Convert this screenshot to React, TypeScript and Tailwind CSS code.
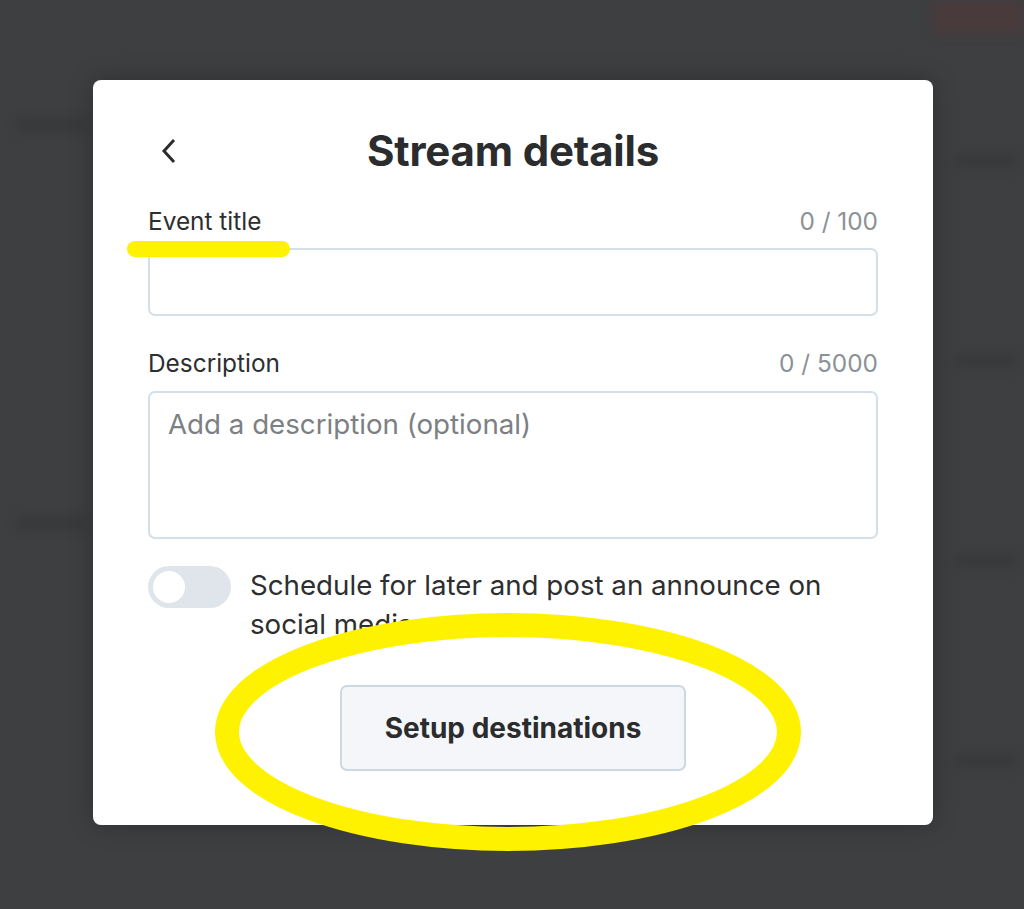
import React from "react";

export default function App() {
  return (
    <div
      className="relative w-[1024px] h-[909px] overflow-hidden bg-[#3e3f41]"
      style={{ fontFamily: "Inter, 'Noto Sans', sans-serif" }}
    >
      {/* dimmed page behind the dialog */}
      <div className="flex justify-between w-full h-full blur-[6px] opacity-40">
        <div className="flex flex-col w-[100px] pl-[16px]">
          <div className="mt-[118px] h-[14px] w-[70px] rounded bg-[#2e2f31]" />
          <div className="mt-[384px] h-[14px] w-[70px] rounded bg-[#2e2f31]" />
        </div>
        <div className="flex flex-col items-end w-[100px]">
          <div className="h-[34px] w-[92px] bg-[#5a3434]" />
          <div className="mt-[120px] mr-[8px] h-[14px] w-[60px] rounded bg-[#2e2f31]" />
          <div className="mt-[186px] mr-[8px] h-[14px] w-[60px] rounded bg-[#2e2f31]" />
          <div className="mt-[186px] mr-[8px] h-[14px] w-[60px] rounded bg-[#2e2f31]" />
          <div className="mt-[186px] mr-[8px] h-[14px] w-[60px] rounded bg-[#2e2f31]" />
        </div>
      </div>

      {/* dialog overlay */}
      <div className="absolute inset-0 pt-[80px] pl-[93px]">
        <div className="relative w-[840px] h-[745px] rounded-[8px] bg-white px-[55px] pt-[47px] shadow-[0_0_24px_rgba(0,0,0,0.25)]">
          {/* header */}
          <div className="grid grid-cols-[1fr_auto_1fr] items-center h-[48px]">
            <div className="flex items-center pl-[10px]">
              <svg width="22" height="26" viewBox="0 0 22 26" fill="none">
                <path
                  d="M15 3 L6 13 L15 23"
                  stroke="#2b2c2e"
                  strokeWidth="3"
                  strokeLinecap="square"
                  strokeLinejoin="miter"
                />
              </svg>
            </div>
            <h1 className="text-[42px] leading-[48px] font-bold text-[#2b2c2e] tracking-[-0.2px]">
              Stream details
            </h1>
            <div />
          </div>

          {/* event title */}
          <div className="mt-[31px] flex justify-between items-center h-[30px]">
            <span className="text-[24.4px] text-[#2d2e30]">Event title</span>
            <span className="text-[24.4px] text-[#8b9196]">0 / 100</span>
          </div>
          <div className="relative mt-[12px]">
            <div className="absolute left-[-21px] top-[-7px] h-[16px] w-[163px] rounded-full bg-[#fff200]" />
            <div className="h-[68px] w-full rounded-[7px] border-2 border-[#d3e0e9]" />
          </div>

          {/* description */}
          <div className="mt-[32px] flex justify-between items-center h-[30px]">
            <span className="text-[24.4px] text-[#2d2e30]">Description</span>
            <span className="text-[24.4px] text-[#8b9196]">0 / 5000</span>
          </div>
          <div className="mt-[13px] h-[148px] w-full rounded-[7px] border-2 border-[#d3e0e9] px-[18px] pt-[13px]">
            <span className="text-[27.7px] leading-[36px] text-[#7c8084]">
              Add a description (optional)
            </span>
          </div>

          {/* toggle row */}
          <div className="mt-[27px] flex items-start gap-[19px]">
            <div className="flex items-center shrink-0 w-[83px] h-[42px] rounded-full bg-[#dfe5ea] px-[3px]">
              <div className="w-[36px] h-[36px] rounded-full bg-white border-2 border-[#dfe5ea]" />
            </div>
            <p className="flex-1 text-[27.7px] leading-[39px] text-[#2d2e30]">
              Schedule for later and post an announce on social media
            </p>
          </div>

          {/* button */}
          <div className="mt-[41px] flex justify-center">
            <button className="w-[346px] h-[86px] rounded-[7px] border-2 border-[#ccd8e2] bg-[#f4f6f9] text-[28px] font-bold text-[#2b2c2e]">
              Setup destinations
            </button>
          </div>
        </div>
      </div>

      {/* yellow annotation circle */}
      <svg
        className="absolute left-[215px] top-[613px]"
        width="586"
        height="238"
        viewBox="0 0 586 238"
      >
        <ellipse
          cx="293"
          cy="119"
          rx="281"
          ry="107"
          fill="none"
          stroke="#fff200"
          strokeWidth="24"
        />
      </svg>
    </div>
  );
}
